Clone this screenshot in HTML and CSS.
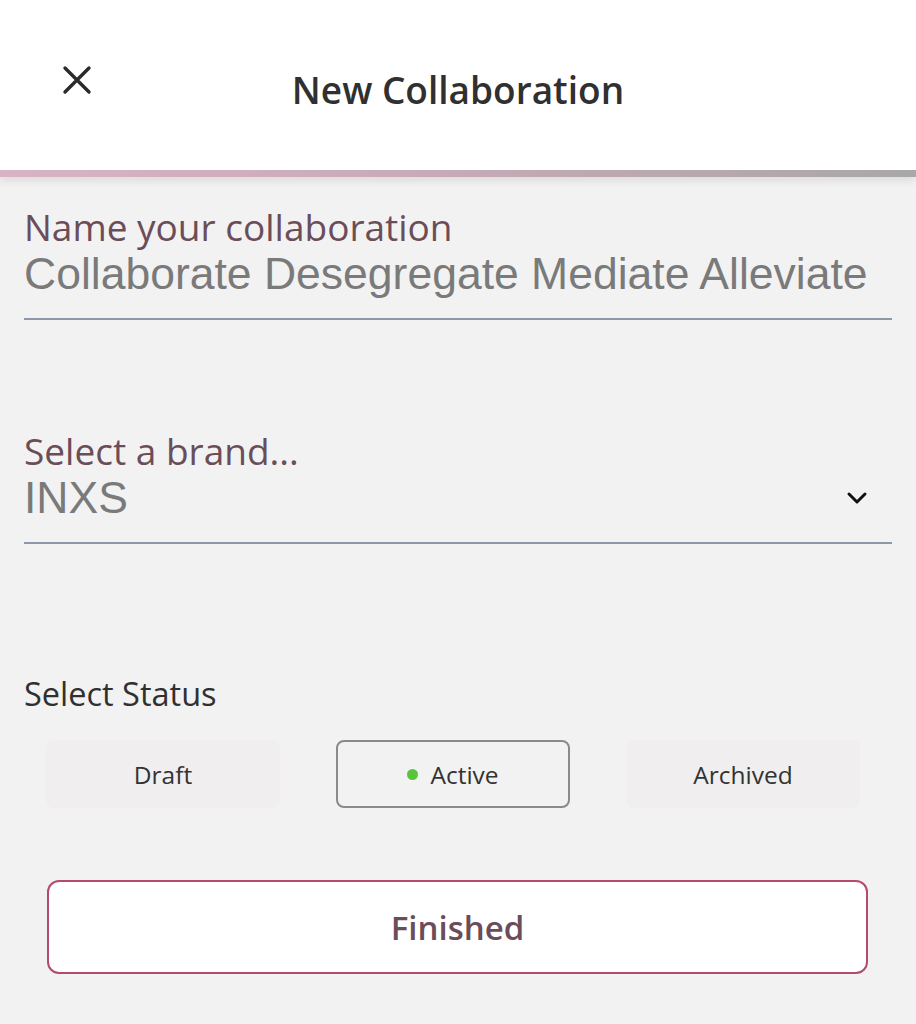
FILE: index.html
```html
<!DOCTYPE html>
<html>
<head>
  <meta charset="utf-8">
  <link rel="stylesheet" href="styles.css">
</head>
<body>
  <div class="header">
    <button class="close-btn" aria-label="Close">
      <svg width="32" height="32" viewBox="0 0 32 32">
        <path d="M4 4 L28 28 M28 4 L4 28" stroke="#2b2b2b" stroke-width="3.4" stroke-linecap="round" fill="none"/>
      </svg>
    </button>
    <div class="title">New Collaboration</div>
  </div>
  <div class="header-band"></div>

  <div class="content">
    <div class="field">
      <div class="field-label">Name your collaboration</div>
      <div class="field-value">Collaborate Desegregate Mediate Alleviate</div>
    </div>

    <div class="field field-select">
      <div class="field-label">Select a brand...</div>
      <div class="select-row">
        <div class="field-value">INXS</div>
        <svg class="chevron" width="22" height="14" viewBox="0 0 22 14">
          <path d="M3 3 L11 11 L19 3" stroke="#111" stroke-width="3" fill="none" stroke-linecap="round" stroke-linejoin="round"/>
        </svg>
      </div>
    </div>

    <div class="status">
      <div class="status-title">Select Status</div>
      <div class="status-options">
        <div class="status-option">Draft</div>
        <div class="status-option selected"><span class="dot"></span>Active</div>
        <div class="status-option">Archived</div>
      </div>
    </div>

    <button class="finish-btn">Finished</button>
  </div>
</body>
</html>
```

FILE: styles.css
```css
* {
  margin: 0;
  padding: 0;
  box-sizing: border-box;
}

body {
  width: 916px;
  height: 1024px;
  overflow: hidden;
  background: #f2f2f2;
  font-family: 'Open Sans', sans-serif;
  color: #333;
}

.header {
  height: 170px;
  background: #fff;
  display: flex;
  align-items: center;
  justify-content: center;
  position: relative;
}

.close-btn {
  position: absolute;
  left: 61px;
  top: 64px;
  background: none;
  border: none;
  display: flex;
}

.title {
  font-size: 37px;
  font-weight: 600;
  color: #303030;
  margin-top: 8px;
}

.header-band {
  height: 7px;
  background: linear-gradient(90deg, #d9b3c5 0%, #c9aab8 45%, #a9a7a8 100%);
  box-shadow: 0 3px 8px rgba(0, 0, 0, 0.12);
}

.content {
  padding: 28px 24px 0;
}

.field {
  border-bottom: 2px solid #8e99a8;
  padding-bottom: 19px;
}

.field-label {
  font-size: 37px;
  line-height: 44px;
  color: #6b4d59;
}

.field-value {
  font-family: 'Liberation Sans', Arial, sans-serif;
  font-size: 44.5px;
  line-height: 50px;
  color: #7a7a7a;
}

.field-select {
  margin-top: 109px;
}

.select-row {
  display: flex;
  align-items: center;
  justify-content: space-between;
}

.chevron {
  margin-right: 24px;
}

.status {
  margin-top: 130px;
}

.status-title {
  font-size: 32.5px;
  line-height: 40px;
  color: #303030;
}

.status-options {
  display: grid;
  grid-template-columns: 1fr 1fr 1fr;
  gap: 56px;
  padding: 0 32px 0 22px;
  margin-top: 26px;
}

.status-option {
  height: 68px;
  display: flex;
  align-items: center;
  justify-content: center;
  gap: 12px;
  font-size: 24.5px;
  color: #333;
  background: #f0eeef;
  border-radius: 8px;
}

.status-option.selected {
  background: transparent;
  border: 2px solid #8a8a8a;
}

.dot {
  width: 11px;
  height: 11px;
  border-radius: 50%;
  background: #55c63c;
}

.finish-btn {
  display: block;
  width: 821px;
  height: 94px;
  margin: 72px 0 0 23px;
  background: #fff;
  border: 2px solid #b44a72;
  border-radius: 12px;
  font-family: 'Open Sans', sans-serif;
  font-size: 33px;
  font-weight: 600;
  color: #6b4d59;
}
```
